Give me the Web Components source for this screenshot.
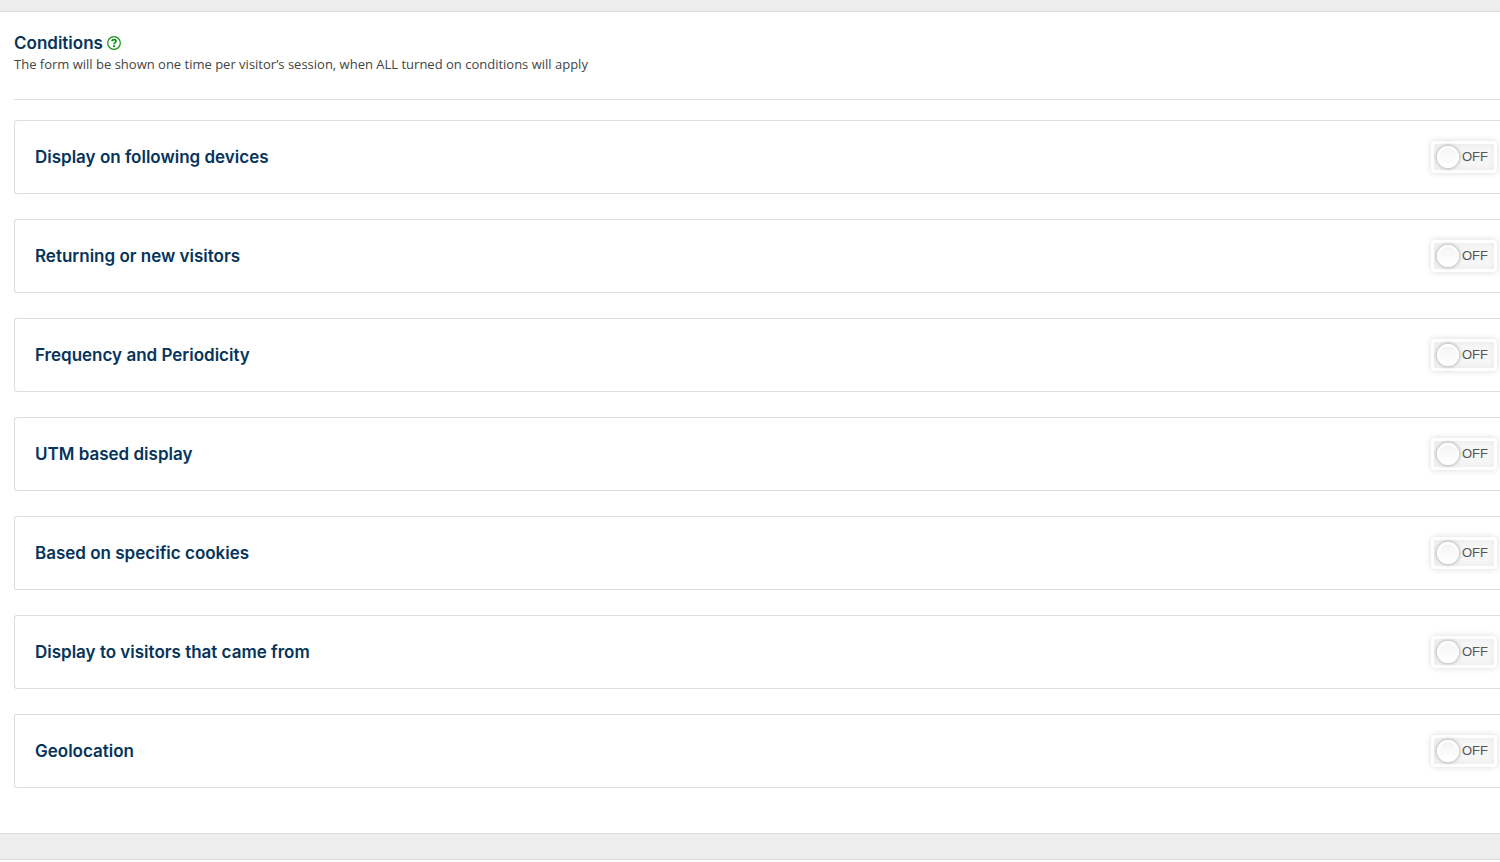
<!DOCTYPE html>
<html lang="en">
<head>
<meta charset="utf-8">
<title>Conditions</title>
<style>
body { margin: 0; background: #fff; font-family: Inter, "Open Sans", sans-serif; color: #444; overflow-x: hidden; }
</style>
</head>
<body>
<conditions-page>
  <section-header slot="header">
    Conditions
    <span slot="description">The form will be shown one time per visitor’s session, when ALL turned on conditions will apply</span>
  </section-header>
  <condition-card name="Display on following devices"></condition-card>
  <condition-card name="Returning or new visitors"></condition-card>
  <condition-card name="Frequency and Periodicity"></condition-card>
  <condition-card name="UTM based display"></condition-card>
  <condition-card name="Based on specific cookies"></condition-card>
  <condition-card name="Display to visitors that came from"></condition-card>
  <condition-card name="Geolocation"></condition-card>
</conditions-page>
<script>
class ConditionsPage extends HTMLElement {
  constructor() {
    super();
    this.attachShadow({ mode: 'open' }).innerHTML = `
      <style>
        :host { display: block; }
        .top { height: 11px; background: #ededed; border-bottom: 1px solid #ddd; }
        main { padding: 20px 0 45px 14px; }
        .list { display: flex; flex-direction: column; gap: 25px; padding-top: 20px; }
        .bottom { height: 25px; background: #ededed; border: solid #ddd; border-width: 1px 0; }
      </style>
      <div class="top"></div>
      <main>
        <slot name="header"></slot>
        <div class="list"><slot></slot></div>
      </main>
      <div class="bottom"></div>`;
  }
}

class SectionHeader extends HTMLElement {
  constructor() {
    super();
    this.attachShadow({ mode: 'open' }).innerHTML = `
      <style>
        :host { display: block; border-bottom: 1px solid #ddd; padding-bottom: 25px; }
        h2 { display: flex; align-items: center; gap: 4px; margin: 0; font-size: 17px; line-height: 22px; font-weight: 600; color: #06345a; }
        button { display: block; border: 0; padding: 0; background: none; color: #109010; cursor: help; }
        svg { display: block; width: 14px; height: 14px; }
        p { margin: 0; font: 13px/20px "Open Sans", "Noto Sans", sans-serif; }
      </style>
      <h2><span><slot></slot></span>
        <button type="button" aria-label="Help">
          <svg viewBox="0 0 14 14" fill="none" stroke="currentColor" aria-hidden="true">
            <circle cx="7" cy="7" r="6.3" stroke-width="1.2"/>
            <path d="M4.7 5.2C5.200 4.200 6 3.700 7 3.700C8.200 3.700 9 4.300 9 5.300C9 6.700 7 6.600 7 8.300" stroke-width="1.7"/>
            <path d="M6 9.200h2v1.900H6z" fill="currentColor" stroke="none"/>
          </svg>
        </button>
      </h2>
      <p><slot name="description"></slot></p>`;
  }
}

class ToggleSwitch extends HTMLElement {
  constructor() {
    super();
    this.attachShadow({ mode: 'open' }).innerHTML = `
      <style>
        :host { display: block; }
        label { box-sizing: border-box; display: flex; align-items: center; gap: 3px; width: 66px; height: 32px; padding-left: 3px;
          border: 3px solid #fff; border-radius: 4px; background: #f6f6f6; color: #555; cursor: pointer;
          box-shadow: 0 0 6px rgba(0,0,0,.15), inset 0 0 6px rgba(0,0,0,.06);
          font: 13px/26px "Liberation Sans", Arial, sans-serif; }
        input { appearance: none; flex: none; margin: 0; width: 22px; height: 22px; border-radius: 50%; cursor: pointer;
          border: 2px solid #fff; background: linear-gradient(#f4f4f4, #fff); box-shadow: 0 0 4px rgba(0,0,0,.4); }
      </style>
      <label><input type="checkbox" role="switch"><span>OFF</span></label>`;
    const input = this.shadowRoot.querySelector('input');
    const text = this.shadowRoot.querySelector('span');
    input.addEventListener('change', () => { text.textContent = input.checked ? 'ON' : 'OFF'; });
  }
  connectedCallback() {
    this.shadowRoot.querySelector('input').setAttribute('aria-label', this.getAttribute('label'));
  }
}

class ConditionCard extends HTMLElement {
  constructor() {
    super();
    this.attachShadow({ mode: 'open' }).innerHTML = `
      <style>
        :host { display: flex; align-items: center; justify-content: space-between; padding: 20px 3px 20px 20px;
          border: 1px solid #ddd; border-right: 0; border-radius: 3px 0 0 3px; }
        h3 { margin: 0; font-size: 17px; line-height: 22px; font-weight: 600; color: #06345a; }
      </style>
      <h3></h3><toggle-switch></toggle-switch>`;
  }
  connectedCallback() {
    const name = this.getAttribute('name');
    this.shadowRoot.querySelector('h3').textContent = name;
    this.shadowRoot.querySelector('toggle-switch').setAttribute('label', name);
  }
}

customElements.define('toggle-switch', ToggleSwitch);
customElements.define('condition-card', ConditionCard);
customElements.define('section-header', SectionHeader);
customElements.define('conditions-page', ConditionsPage);
</script>
</body>
</html>
